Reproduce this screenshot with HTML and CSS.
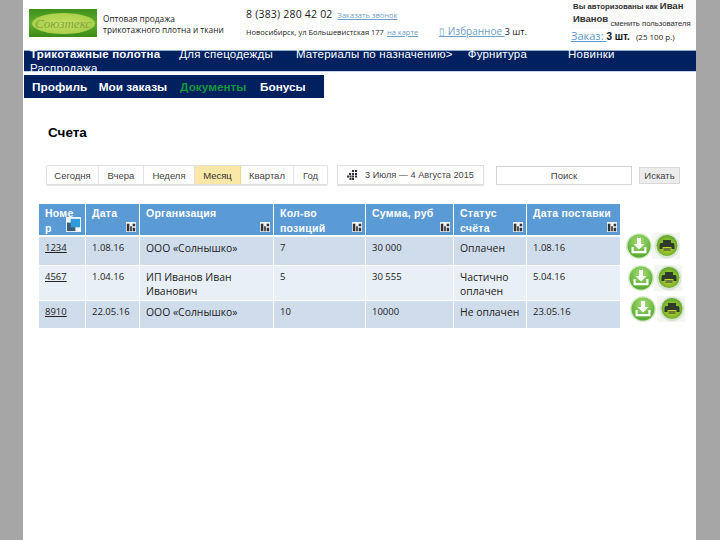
FILE: index.html
```html
<!DOCTYPE html>
<html lang="ru">
<head>
<meta charset="utf-8">
<title>Счета</title>
<link rel="stylesheet" href="styles.css">
</head>
<body>
<div class="sheet">
  <header class="top">
    <div class="logo"><span class="logo-oval">Союзтекс</span></div>
    <p class="tagline">Оптовая продажа<br>трикотажного плотна и ткани</p>
    <div class="contacts">
      <div class="phone-row"><span class="phone">8 (383) 280 42 02</span><a class="tiny-link" href="#">Заказать звонок</a></div>
      <div class="address-row"><span class="address">Новосибирск, ул Большевистская 177</span><a class="tiny-link" href="#">на карте</a><span class="fav"><a href="#">▯ Избранное </a>3 шт.</span></div>
    </div>
    <div class="account">
      <div class="auth">
        <div class="auth-line">Вы авторизованы как <b>Иван</b></div>
        <div class="auth-line"><b>Иванов</b> <small>сменить пользователя</small></div>
      </div>
      <div class="order"><a href="#">Заказ: </a><b>3 шт.</b> <span>(25 100 р.)</span></div>
    </div>
  </header>

  <nav class="mainnav">
    <div class="mainnav-in">
      <a class="m1" href="#"><b>Трикотажные полотна</b></a>
      <a class="m2" href="#">Для спецодежды</a>
      <a class="m3" href="#">Материалы по назначению&gt;</a>
      <a class="m4" href="#">Фурнитура</a>
      <a class="m5" href="#">Новинки</a>
      <a href="#">Распродажа</a>
    </div>
  </nav>

  <nav class="subnav">
    <a href="#">Профиль</a>
    <a href="#">Мои заказы</a>
    <a class="active" href="#">Документы</a>
    <a href="#">Бонусы</a>
  </nav>

  <h1 class="title">Счета</h1>

  <div class="toolbar">
    <div class="periods">
      <span class="p1">Сегодня</span><span class="p2">Вчера</span><span class="p3">Неделя</span><span class="p4 on">Месяц</span><span class="p5">Квартал</span><span class="p6">Год</span>
    </div>
    <div class="daterange">
      <svg class="cal" width="12" height="10" viewBox="0 0 12 10"><path fill="#333" d="M5 0h2v2H5zM8 0h2v2H8zM2 3h2v2H2zM5 3h2v2H5zM8 3h2v2H8zM0 5.500h2v2H0zM2.500 5.500h2v2h-2zM5 5.500h2v2H5zM8 5.500h2v2H8zM2.500 8h2v2h-2zM5 8h2v2H5z"/></svg>
      <span>3 Июля — 4 Августа 2015</span>
    </div>
    <div class="search">Поиск</div>
    <div class="go">Искать</div>
  </div>

  <div class="tablewrap">
    <table class="grid">
      <thead>
        <tr>
          <th class="c1">Номер<svg class="sort first" viewBox="0 0 16 16"><rect width="16" height="16" fill="#eef6fb"/><rect x="1" y="6" width="9" height="9" fill="#3b5f78"/><rect x="5" y="2" width="10" height="9" fill="#2f9bd8"/></svg></th>
          <th class="c2">Дата<svg class="sort" viewBox="0 0 12 12"><use href="#srt"/></svg></th>
          <th class="c3">Организация<svg class="sort" viewBox="0 0 12 12"><use href="#srt"/></svg></th>
          <th class="c4">Кол-во позиций<svg class="sort" viewBox="0 0 12 12"><use href="#srt"/></svg></th>
          <th class="c5">Сумма, руб<svg class="sort" viewBox="0 0 12 12"><use href="#srt"/></svg></th>
          <th class="c6">Статус счёта<svg class="sort" viewBox="0 0 12 12"><use href="#srt"/></svg></th>
          <th class="c7">Дата поставки<svg class="sort" viewBox="0 0 12 12"><use href="#srt"/></svg></th>
        </tr>
      </thead>
      <tbody>
        <tr class="r1 odd"><td><a href="#">1234</a></td><td>1.08.16</td><td class="txt">ООО «Солнышко»</td><td>7</td><td>30 000</td><td class="txt">Оплачен</td><td>1.08.16</td></tr>
        <tr class="r2"><td><a href="#">4567</a></td><td>1.04.16</td><td class="txt">ИП Иванов Иван Иванович</td><td>5</td><td>30 555</td><td class="txt">Частично оплачен</td><td>5.04.16</td></tr>
        <tr class="r3 odd"><td><a href="#">8910</a></td><td>22.05.16</td><td class="txt">ООО «Солнышко»</td><td>10</td><td>10000</td><td class="txt">Не оплачен</td><td>23.05.16</td></tr>
      </tbody>
    </table>
    <div class="actions">
      <div class="act a1"><svg class="dl" viewBox="0 0 26 26"><use href="#dl"/></svg><svg class="pr" viewBox="0 0 28 26"><use href="#pr"/></svg></div>
      <div class="act a2"><svg class="dl" viewBox="0 0 26 26"><use href="#dl"/></svg><svg class="pr" viewBox="0 0 28 26"><use href="#pr"/></svg></div>
      <div class="act a3"><svg class="dl" viewBox="0 0 26 26"><use href="#dl"/></svg><svg class="pr" viewBox="0 0 28 26"><use href="#pr"/></svg></div>
    </div>
  </div>
</div>

<svg class="defs" width="0" height="0">
  <defs>
    <radialGradient id="g1" cx="50%" cy="30%" r="75%"><stop offset="0" stop-color="#a8dc74"/><stop offset="1" stop-color="#4aa52a"/></radialGradient>
    <radialGradient id="g2" cx="50%" cy="55%" r="60%"><stop offset="0" stop-color="#dde01f"/><stop offset="1" stop-color="#4fa035"/></radialGradient>
    <g id="srt"><rect width="12" height="12" fill="#eef2f6"/><path fill="#333" d="M1 2h3v9H1zM5 5h2v6H5zM8 2h3v3H8zM8 7h3v4H8z"/></g>
    <g id="dl"><circle cx="13" cy="13" r="13" fill="#d6ecc4"/><circle cx="13" cy="13" r="11.500" fill="url(#g1)"/><path fill="#fff" d="M11 5h4v6h3.500L13 16.500 7.500 11H11zM5.500 14h2.200v4h10.600v-4h2.200v6.200h-15z"/></g>
    <g id="pr"><rect width="28" height="26" fill="#f4f6f2"/><circle cx="15" cy="13" r="12.500" fill="#d9e4d2"/><circle cx="15" cy="12.500" r="10.500" fill="url(#g2)"/><path fill="#2d3a2c" d="M11 7h8v3h2.500l1 2v4h-3v-2h-9v2h-3v-4l1-2H11z"/><rect x="11.500" y="15" width="7" height="3" fill="#6a7a3a"/></g>
  </defs>
</svg>
</body>
</html>
```

FILE: styles.css
```css
* { box-sizing: border-box; }
html, body { margin: 0; height: 100%; }
body {
  background: #a6a6a6;
  font-family: "Open Sans", "Liberation Sans", sans-serif;
  color: #1a1a1a;
  overflow: hidden;
}
a { color: inherit; }
.defs { position: absolute; }

.sheet {
  margin-left: 23px;
  width: 673px;
  height: 540px;
  background: #fff;
  overflow: hidden;
}

/* header */
.top { display: flex; height: 50px; }
.logo {
  width: 68px;
  height: 28px;
  margin: 9px 0 0 6px;
  background: linear-gradient(#3f8f1d, #62ad2c 50%, #3c8a18);
  display: flex;
  align-items: center;
  justify-content: center;
}
.logo-oval {
  width: 63px;
  height: 21px;
  border-radius: 50%;
  background: radial-gradient(ellipse, #c8de62, #9ccb45);
  color: #7fa83f;
  font: italic 13px/21px "Liberation Serif", serif;
  text-align: center;
}
.tagline {
  margin: 13px 0 0 6px;
  width: 143px;
  font-size: 8.300px;
  line-height: 11px;
}
.contacts { width: 325px; }
.phone-row { margin-top: 5px; height: 18px; display: flex; align-items: baseline; }
.phone { font-size: 10.500px; line-height: 18px; letter-spacing: .2px; margin-right: 5px; }
.tiny-link { font-size: 7.500px; color: #6f9ec6; }
.address-row { margin-top: 1px; display: flex; align-items: baseline; }
.address { font-size: 7.500px; margin-right: 3px; }
.fav { font-size: 9px; margin-left: 21px; }
.fav a { color: #6f9ec6; font-size: 10px; }
.account { width: 125px; }
.auth { height: 29px; padding-left: 2px; background: #fbfbfb; font-family: "Liberation Sans", sans-serif; }
.auth-line { font-size: 7.800px; line-height: 11.500px; font-weight: 700; color: #333; white-space: nowrap; }
.auth-line b { font-size: 9.500px; }
.auth-line small { font-size: 7.700px; font-weight: 400; vertical-align: -4px; }
.order { font-size: 8px; white-space: nowrap; line-height: 14px; }
.order a { font-size: 11px; color: #5b97c9; }
.order b { font-family: "Liberation Sans", sans-serif; font-size: 10px; color: #111; margin-right: 4px; }

/* main navigation */
.mainnav {
  height: 22px;
  margin-left: 1px;
  background: #002060;
  border-top: 1px solid #8faccc;
  border-bottom: 1px solid #c4d4e6;
  color: #fff;
  font-family: "Liberation Sans", sans-serif;
  font-size: 11.500px;
  line-height: 14px;
}
.mainnav-in { margin-top: -4px; padding-left: 6px; display: flex; flex-wrap: wrap; letter-spacing: .22px; }
.mainnav a { text-decoration: none; white-space: nowrap; }
.m1 { margin-right: 19px; }
.m2 { margin-right: 23px; }
.m3 { margin-right: 15px; }
.m4 { margin-right: 41px; }
.m5 { margin-right: 60px; }

/* sub navigation */
.subnav {
  width: 300px;
  height: 23px;
  margin: 3px 0 0 1px;
  padding: 1px 0 0 8px;
  background: #002060;
  display: flex;
  align-items: center;
  gap: 11.500px;
  font: 700 11.800px/22px "Liberation Sans", sans-serif;
  color: #fff;
}
.subnav a { text-decoration: none; }
.subnav .active { color: #12963c; margin-left: 1.500px; margin-right: 2px; }

.title {
  margin: 27px 0 0 25px;
  font: 700 13.500px/16px "Liberation Sans", sans-serif;
  color: #000;
}

/* toolbar */
.toolbar {
  display: flex;
  align-items: center;
  margin: 24px 0 0 23px;
  height: 20px;
  font-family: "Liberation Sans", sans-serif;
  font-size: 9.500px;
  color: #444;
}
.periods { display: flex; width: 282px; height: 20px; border: 1px solid #e0e0e0; border-radius: 2px; box-shadow: 0 1px 1px #e4e4e4; }
.periods span { display: flex; align-items: center; justify-content: center; border-right: 1px solid #e4e4e4; }
.periods span:last-child { border-right: 0; }
.p1 { width: 52px; }
.p2 { width: 45px; }
.p3 { width: 51px; }
.p4 { width: 46px; }
.p5 { width: 53px; }
.p6 { flex: 1; }
.periods .on { background: #fbe8a6; border-color: #ecd98e; color: #333; }
.daterange {
  width: 147px;
  height: 20px;
  margin-left: 9px;
  padding-left: 9px;
  border: 1px solid #e0e0e0;
  box-shadow: 0 1px 1px #e4e4e4;
  display: flex;
  align-items: center;
  gap: 6px;
  white-space: nowrap;
  font-size: 9.200px;
}
.search {
  width: 136px;
  height: 19px;
  margin-left: 12px;
  border: 1px solid #d4d4d4;
  text-align: center;
  line-height: 17px;
}
.go {
  width: 41px;
  height: 17px;
  margin-left: 7px;
  background: #ececec;
  border: 1px solid #d8d8d8;
  text-align: center;
  line-height: 15px;
}

/* table */
.tablewrap { display: flex; margin: 18px 0 0 15px; align-items: flex-start; }
.grid {
  table-layout: fixed;
  width: 583px;
  border-collapse: separate;
  border-spacing: 1px;
  font-size: 9.500px;
  line-height: 14px;
  color: #222;
}
.grid th {
  position: relative;
  height: 32px;
  padding: 2px 6px 0;
  background: #5b9bd5;
  color: #fff;
  font: 700 10.500px/14.500px "Liberation Sans", sans-serif;
  letter-spacing: .25px;
  text-align: left;
  vertical-align: top;
  border-bottom: 1px solid #fff;
  word-break: break-all;
}
.c1 { width: 46px; }
.c2 { width: 53px; }
.c3 { width: 133px; }
.c4 { width: 91px; }
.c5 { width: 87px; }
.c6 { width: 72px; }
.c7 { width: 93px; }
.c3, .c4, .c5, .c6, .c7 { word-break: normal !important; }
.grid td { padding: 4px 6px 0; vertical-align: top; background: #e9eff7; }
.grid td.txt { font-size: 10.400px; }
.grid .odd td { background: #cfdcec; }
.r1 td { height: 28px; }
.r2 td { height: 34px; }
.r3 td { height: 27px; }
.grid td a { color: #222; }
.sort { position: absolute; right: 3px; bottom: 3px; width: 10px; height: 10px; }
.sort.first { right: 4px; bottom: 3px; width: 15px; height: 15px; }

/* row actions */
.actions { padding-top: 30px; margin-left: 5px; }
.act { display: flex; align-items: center; }
.dl { width: 26px; height: 26px; }
.pr { width: 28px; height: 26px; }
.a2 { margin: 6px 0 0 2px; }
.a3 { margin: 5px 0 0 4px; }
.a3 .pr { margin-left: 1px; }
```
